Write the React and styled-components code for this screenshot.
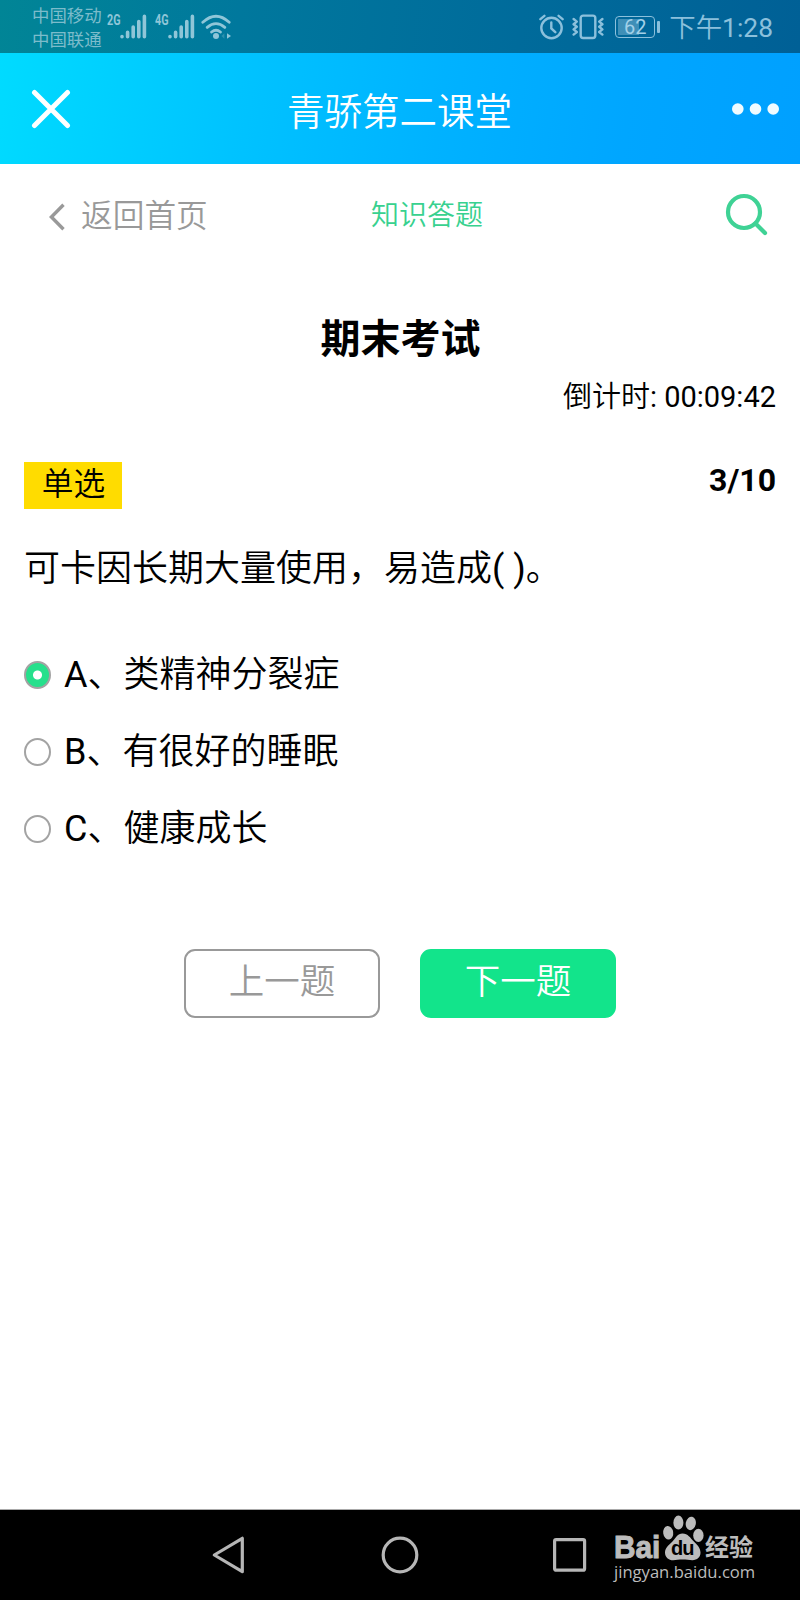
import React, { useState } from 'react'
import styled, { createGlobalStyle } from 'styled-components'

const options = [
  { id: 'A', text: '类精神分裂症' },
  { id: 'B', text: '有很好的睡眠' },
  { id: 'C', text: '健康成长' },
]

const Signal = () => (
  <svg width="27" height="26" viewBox="0 0 27 26" stroke="currentColor" strokeWidth="3.6" strokeLinecap="round">
    <path d="M2 22.6v.2M7.6 18.4v4.4M13.2 13v9.8M18.8 7.6v15.2M24.4 2.4v20.4" />
  </svg>
)

const Wifi = () => (
  <svg width="30" height="26" viewBox="0 0 30 26" fill="none" stroke="currentColor" strokeWidth="2.8" strokeLinecap="round">
    <path d="M1.8 8.2Q15-3.8 28.2 8.2M6.2 13.4q8.8-7.6 17.6 0M10.6 18q4.4-3.6 8.8 0" />
    <circle cx="15" cy="22" r="3" fill="currentColor" stroke="none" />
    <path d="M26 19.2v5.6l4-2.8z" fill="currentColor" stroke="none" />
    <path d="M23.4 19.2v5.6l-3-2.8z" fill="currentColor" stroke="none" opacity=".3" />
  </svg>
)

const Alarm = () => (
  <svg width="25" height="26" viewBox="0 0 25 26" fill="none" stroke="currentColor" strokeWidth="2.4" strokeLinecap="round">
    <circle cx="12.5" cy="14" r="10.2" />
    <path d="M12.3 8.4v6l4 3.8M1.4 5.2l4-3.4M23.6 5.2l-4-3.4" />
  </svg>
)

const Vibrate = () => (
  <svg width="32" height="26" viewBox="0 0 32 26" fill="none" stroke="currentColor" strokeWidth="2.4" strokeLinecap="round" strokeLinejoin="round">
    <rect x="8.7" y="1.6" width="14.6" height="22.4" rx="2.4" />
    <path d="M1.6 5l3.2 2.6-3.2 2.6 3.2 2.6-3.2 2.6 3.2 2.6-3.2 2.6M30.4 5l-3.2 2.6 3.2 2.6-3.2 2.6 3.2 2.6-3.2 2.6 3.2 2.6" />
  </svg>
)

const Paw = () => (
  <svg width="42" height="46" viewBox="0 0 42 46" fill="currentColor">
    <ellipse cx="6.2" cy="17.8" rx="5" ry="6.8" transform="rotate(-8 6.2 17.8)" />
    <ellipse cx="16.4" cy="7.6" rx="5" ry="7" />
    <ellipse cx="28.8" cy="8.4" rx="5" ry="6.8" transform="rotate(12 28.8 8.4)" />
    <ellipse cx="36.4" cy="20.4" rx="5.2" ry="6.6" />
    <path d="M20.5 18.5c-5 0-6.6 4.2-9.6 7.4C7.9 29.2 3 32.4 3 37.4c0 4.8 3.6 7.8 8.2 7.8 3 0 5.7-.6 9.3-.6s6.8.6 9.9.6c4.8 0 8.1-2.8 8.1-7.6 0-4.8-3.6-8.2-6.9-11.4-3.2-3.2-5.700-7.700-11.100-7.700z" />
  </svg>
)

const App = () => {
  const [selected, setSelected] = useState('A')

  return (
    <Screen>
      <GlobalStyle />
      <StatusBar>
        <Carriers>
          <span>中国移动</span>
          <span>中国联通</span>
        </Carriers>
        <Network><span>2G</span></Network>
        <Signal />
        <Network $gap="8px"><span>4G</span></Network>
        <Signal />
        <WifiWrap><Wifi /></WifiWrap>
        <StatusRight>
          <Alarm />
          <Vibrate />
          <Battery><span>62</span></Battery>
          <Clock>下午<Regular>1:28</Regular></Clock>
        </StatusRight>
      </StatusBar>

      <Header>
        <svg width="40" height="40" viewBox="0 0 40 40" stroke="#fff" strokeWidth="5" strokeLinecap="round">
          <path d="M3.5 3.5l33 33M36.5 3.5l-33 33" />
        </svg>
        <h1>青骄第二课堂</h1>
        <svg width="48" height="12" viewBox="0 0 48 12" fill="#f0fbff">
          <circle cx="5.8" cy="6" r="5.8" />
          <circle cx="23.5" cy="6" r="5.8" />
          <circle cx="41.2" cy="6" r="5.8" />
        </svg>
      </Header>

      <SubNav>
        <Back>
          <svg width="16" height="28" viewBox="0 0 16 28" fill="none" stroke="currentColor" strokeWidth="3.4">
            <path d="M14.5 1.8L2.4 14l12.1 12.2" />
          </svg>
          <span>返回首页</span>
        </Back>
        <Section>知识答题</Section>
        <svg width="44" height="44" viewBox="0 0 44 44" fill="none" stroke="#3fd295" strokeWidth="4.2" strokeLinecap="round">
          <circle cx="19" cy="19" r="16" />
          <path d="M30.5 30.5l9.5 9.5" />
        </svg>
      </SubNav>

      <Quiz>
        <Title>期末考试</Title>
        <Countdown>倒计时<Regular>: 00:09:42</Regular></Countdown>
        <Meta>
          <Tag>单选</Tag>
          <Progress>3/10</Progress>
        </Meta>
        <Question>可卡因长期大量使用，易造成<Regular>( )</Regular>。</Question>
        <Options>
          {options.map((item) => (
            <Option key={item.id} onClick={() => setSelected(item.id)}>
              <Radio $checked={selected === item.id} />
              <span><Regular>{item.id}</Regular>、{item.text}</span>
            </Option>
          ))}
        </Options>
        <Actions>
          <Button>上一题</Button>
          <Button $primary>下一题</Button>
        </Actions>
      </Quiz>

      <NavBar>
        <svg width="36" height="40" viewBox="0 0 36 40" fill="none" stroke="currentColor" strokeWidth="3.2" strokeLinejoin="round">
          <path d="M31.3 3.3v33.4L3.3 20z" />
        </svg>
        <svg width="40" height="40" viewBox="0 0 40 40" fill="none" stroke="currentColor" strokeWidth="3.2">
          <circle cx="20" cy="20" r="16.8" />
        </svg>
        <svg width="36" height="40" viewBox="0 0 36 40" fill="none" stroke="currentColor" strokeWidth="3.2">
          <rect x="1.6" y="4.6" width="30" height="30.6" rx="1.5" />
        </svg>
        <Watermark>
          <Logo>
            <Latin>Bai</Latin>
            <PawWrap><Paw /><b>du</b></PawWrap>
            <Chinese>经验</Chinese>
          </Logo>
          <Site>jingyan.baidu.com</Site>
        </Watermark>
      </NavBar>
    </Screen>
  )
}

export default App

const GlobalStyle = createGlobalStyle`
  * {
    box-sizing: border-box;
    margin: 0;
    padding: 0;
  }

  body {
    background: #fff;
    font-family: Roboto, 'Noto Sans CJK SC', sans-serif;
    color: #000;
  }

  svg {
    display: block;
    flex-shrink: 0;
  }
`

const Screen = styled.div`
  width: 800px;
  height: 1600px;
  display: flex;
  flex-direction: column;
  overflow: hidden;
`

/* latin letters and digits stay at normal weight next to the lighter chinese text */
const Regular = styled.span`
  font-weight: 400;
`

const StatusBar = styled.div`
  height: 53px;
  padding: 0 27px 0 32px;
  display: flex;
  align-items: center;
  color: #8fc6d8;
  background: linear-gradient(97deg, #018596 0%, #00789d 30%, #006b9b 65%, #006096 100%);
`

const Carriers = styled.div`
  display: flex;
  flex-direction: column;
  font-size: 17.4px;
  line-height: 24px;
  padding-top: 3px;
  width: 75px;
  color: #7cbccb;
`

const Network = styled.div`
  width: 13px;
  margin-left: ${({ $gap }) => $gap || '0'};
  align-self: flex-start;
  margin-top: 12px;
  font-size: 15px;
  line-height: 16px;
  font-weight: 700;

  span {
    display: block;
    transform: scaleX(0.72);
    transform-origin: 0 0;
  }
`

const WifiWrap = styled.div`
  margin-left: 6px;
`

const StatusRight = styled.div`
  margin-left: auto;
  display: flex;
  align-items: center;
  color: #8bc0dc;

  svg + svg {
    margin-left: 8px;
  }
`

const Battery = styled.div`
  position: relative;
  width: 40px;
  height: 22px;
  margin: 1px 14px 0 11px;
  padding: 2px;
  border: 1.5px solid currentColor;
  border-radius: 4px;

  span {
    display: flex;
    justify-content: center;
    align-items: center;
    height: 100%;
    font-size: 20px;
    color: #a2d0e8;
    background: linear-gradient(90deg, rgba(139, 192, 220, 0.45) 62%, transparent 62%);
  }

  &::after {
    content: '';
    position: absolute;
    right: -6px;
    top: 4px;
    width: 3px;
    height: 12px;
    border-radius: 1px;
    background: currentColor;
  }
`

const Clock = styled.span`
  font-size: 26.4px;
  line-height: 30px;
  padding-top: 2px;
  font-weight: 350;
  white-space: nowrap;
`

const Header = styled.header`
  height: 111px;
  padding: 0 20px 0 31px;
  display: flex;
  align-items: center;
  background: linear-gradient(98deg, #00dbff 0%, #00c3ff 30%, #00b2ff 55%, #00a6ff 78%, #00a0ff 100%);

  h1 {
    flex: 1;
    color: #fff;
    font-size: 37.5px;
    line-height: 48px;
    font-weight: 350;
    padding: 7px 0 0 216px;
  }
`

const SubNav = styled.nav`
  height: 102px;
  padding: 0 31px 0 49px;
  display: flex;
  align-items: center;
`

const Back = styled.a`
  display: flex;
  align-items: center;
  gap: 16px;
  width: 322px;
  color: #999;
  font-size: 31.7px;
  line-height: 40px;
  font-weight: 350;

  svg {
    margin-top: 4px;
  }

  span {
    padding-top: 4px;
  }
`

const Section = styled.span`
  flex: 1;
  padding-top: 2px;
  font-size: 28px;
  line-height: 36px;
  font-weight: 350;
  color: #38d18f;
`

const Quiz = styled.main`
  flex: 1;
  padding: 49px 24px 0;
  display: flex;
  flex-direction: column;
`

const Title = styled.h2`
  padding-left: 1px;
  font-size: 40px;
  line-height: 50px;
  font-weight: 700;
  text-align: center;
`

const Countdown = styled.p`
  margin-top: 12px;
  font-size: 29px;
  line-height: 40px;
  text-align: right;
  font-weight: 350;
`

const Meta = styled.div`
  margin-top: 45px;
  display: flex;
  justify-content: space-between;
  align-items: flex-start;
`

const Tag = styled.span`
  width: 98px;
  height: 47px;
  padding-left: 1px;
  line-height: 46px;
  font-size: 31.7px;
  font-weight: 350;
  text-align: center;
  background: #ffdc00;
`

const Progress = styled.span`
  font-size: 32px;
  line-height: 36px;
  font-weight: 700;
`

const Question = styled.p`
  margin-top: 36px;
  font-size: 36px;
  line-height: 48px;
  font-weight: 350;
`

const Options = styled.ul`
  margin-top: 43px;
  list-style: none;
`

const Option = styled.li`
  height: 77px;
  display: flex;
  align-items: center;
  gap: 13px;
  font-size: 36px;
  line-height: 48px;
  font-weight: 350;
`

const Radio = styled.i`
  width: 27px;
  height: 28px;
  border: 2px solid #a3a3a3;
  border-radius: 50%;
  background: ${({ $checked }) => ($checked ? 'radial-gradient(circle, #fff 4px, #26e08c 5px)' : '#fff')};
`

const Actions = styled.div`
  margin-top: 82px;
  display: flex;
  justify-content: center;
  gap: 40px;
`

const Button = styled.button`
  width: 196px;
  height: 69px;
  padding-bottom: 4px;
  border: 2px solid ${({ $primary }) => ($primary ? '#12e48b' : '#999')};
  border-radius: 11px;
  background: ${({ $primary }) => ($primary ? '#12e48b' : '#fff')};
  color: ${({ $primary }) => ($primary ? '#fff' : '#999')};
  font-family: inherit;
  font-size: 35.5px;
  font-weight: 350;
  line-height: 46px;
`

const NavBar = styled.footer`
  position: relative;
  height: 91px;
  padding: 0 0 1px 211px;
  display: flex;
  align-items: center;
  gap: 133px;
  color: #b6b6b6;
  background: #000;
  border-top: 1px solid #aaa;
`

/* sits on top of the system buttons row */
const Watermark = styled.div`
  position: absolute;
  left: 614px;
  top: 5px;
  color: #bcbcbc;
`

const Logo = styled.div`
  display: flex;
  align-items: flex-end;
  height: 46px;
`

const Latin = styled.b`
  width: 48px;
  font-family: 'Liberation Sans', sans-serif;
  font-size: 32px;
  line-height: 27px;
  -webkit-text-stroke: 1px;
  transform: scaleX(0.93);
  transform-origin: 0 0;
`

const PawWrap = styled.div`
  position: relative;
  width: 43px;

  b {
    position: absolute;
    left: 9px;
    bottom: 3px;
    color: #000;
    font-family: 'Liberation Sans', sans-serif;
    font-size: 20px;
    line-height: 20px;
    letter-spacing: -1px;
  }
`

const Chinese = styled.b`
  font-size: 24px;
  line-height: 25px;
`

const Site = styled.div`
  font-family: 'Open Sans', sans-serif;
  font-size: 16.6px;
  line-height: 21px;
  white-space: nowrap;
`
